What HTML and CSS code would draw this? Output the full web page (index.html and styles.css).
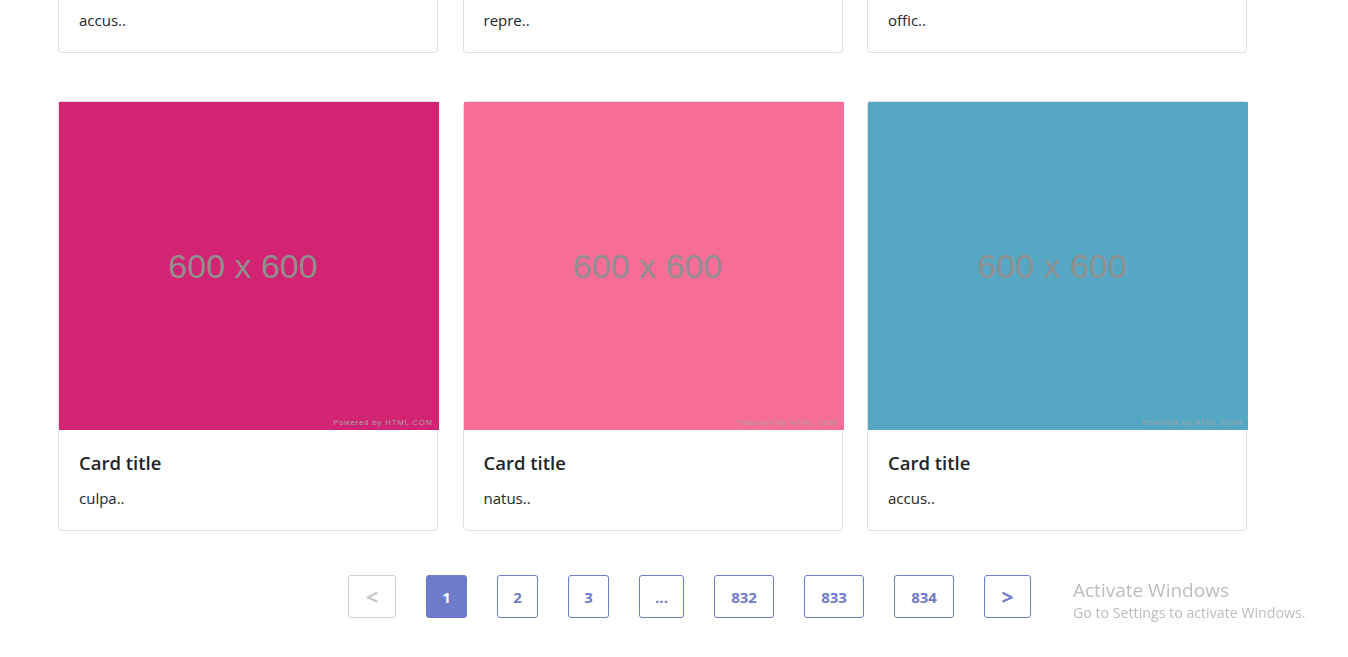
FILE: index.html
```html
<!DOCTYPE html>
<html lang="en">
<head>
<meta charset="utf-8">
<title>Cards</title>
<link rel="stylesheet" href="styles.css">
</head>
<body>
<main class="page">
  <section class="grid grid-top">
    <div class="card card-cut"><div class="card-body"><p class="card-text">accus..</p></div></div>
    <div class="card card-cut"><div class="card-body"><p class="card-text">repre..</p></div></div>
    <div class="card card-cut"><div class="card-body"><p class="card-text">offic..</p></div></div>
  </section>
  <section class="grid">
    <div class="card">
      <div class="thumb thumb-magenta"><span class="thumb-label">600 x 600</span><span class="thumb-credit">Powered by HTML.COM</span></div>
      <div class="card-body"><h5 class="card-title">Card title</h5><p class="card-text">culpa..</p></div>
    </div>
    <div class="card">
      <div class="thumb thumb-pink"><span class="thumb-label">600 x 600</span><span class="thumb-credit">Powered by HTML.COM</span></div>
      <div class="card-body"><h5 class="card-title">Card title</h5><p class="card-text">natus..</p></div>
    </div>
    <div class="card">
      <div class="thumb thumb-blue"><span class="thumb-label">600 x 600</span><span class="thumb-credit">Powered by HTML.COM</span></div>
      <div class="card-body"><h5 class="card-title">Card title</h5><p class="card-text">accus..</p></div>
    </div>
  </section>
  <nav class="pagination">
    <span class="pg pg-arrow-l pg-disabled">&lt;</span>
    <span class="pg pg-num pg-active">1</span>
    <span class="pg pg-num">2</span>
    <span class="pg pg-num">3</span>
    <span class="pg pg-dots">...</span>
    <span class="pg pg-wide">832</span>
    <span class="pg pg-wide">833</span>
    <span class="pg pg-wide">834</span>
    <span class="pg pg-arrow-r">&gt;</span>
  </nav>
</main>
<div class="activate">
  <div class="activate-title">Activate Windows</div>
  <div class="activate-sub">Go to Settings to activate Windows.</div>
</div>
</body>
</html>
```

FILE: styles.css
```css
* { box-sizing: border-box; }
html, body { margin: 0; padding: 0; background: #fff; }
body {
  font-family: "Open Sans", "Noto Sans", sans-serif;
  color: #212529;
  overflow: hidden;
}
.page {
  padding-left: 58px;
  width: 1348px;
}
.grid {
  display: grid;
  grid-template-columns: repeat(3, 380px);
  column-gap: 24.5px;
}
.grid-top { margin-bottom: 48px; }
.card {
  border: 1px solid #dfdfdf;
  border-radius: 4px;
  background: #fff;
}
.card-cut {
  border-top: none;
  border-top-left-radius: 0;
  border-top-right-radius: 0;
}
.card-cut .card-body { padding-top: 9px; padding-bottom: 20px; }
.thumb {
  width: 380px;
  height: 328px;
  display: flex;
  align-items: center;
  justify-content: center;
  position: relative;
  font-family: "Liberation Sans", Arial, sans-serif;
}
.thumb-magenta { background: #d32474; }
.thumb-pink { background: #f66d98; }
.thumb-blue { background: #56a7c3; }
.thumb-label {
  font-size: 34px;
  color: #8f8f8f;
  margin-right: 12px;
  margin-top: 2px;
}
.thumb-credit {
  position: absolute;
  right: 6px;
  bottom: 3px;
  font-size: 7.6px;
  letter-spacing: 0.9px;
  color: #a4a4a4;
}
.card-body {
  padding: 22px 20px 21px;
}
.card-title {
  margin: 0 0 13px;
  font-size: 18.5px;
  font-weight: 600;
  line-height: 1.2;
  color: #212529;
}
.card-text {
  margin: 0;
  font-size: 15px;
  line-height: 1.5;
  color: #212529;
}
.pagination {
  display: flex;
  gap: 30px;
  margin-top: 44px;
  padding-left: 290px;
}
.pg {
  height: 43px;
  display: flex;
  align-items: center;
  justify-content: center;
  border: 1px solid #6f7bcb;
  border-radius: 3px;
  color: #6f7bcb;
  font-size: 15px;
  font-weight: 700;
  background: #fff;
}
.pg-num { width: 41px; }
.pg-dots { width: 45px; }
.pg-wide { width: 60px; }
.pg-arrow-l { width: 48px; font-size: 21px; }
.pg-arrow-r { width: 47px; font-size: 21px; }
.pg-active { background: #6d7bca; color: #fff; }
.pg-disabled { border-color: #cfcfcf; color: #c6c6c6; }
.activate {
  position: fixed;
  left: 1073px;
  top: 578px;
  color: #bdbdbd;
  font-family: "Open Sans", "Noto Sans", sans-serif;
}
.activate-title { font-size: 19px; line-height: 24px; }
.activate-sub { font-size: 14.2px; line-height: 21px; }
```
